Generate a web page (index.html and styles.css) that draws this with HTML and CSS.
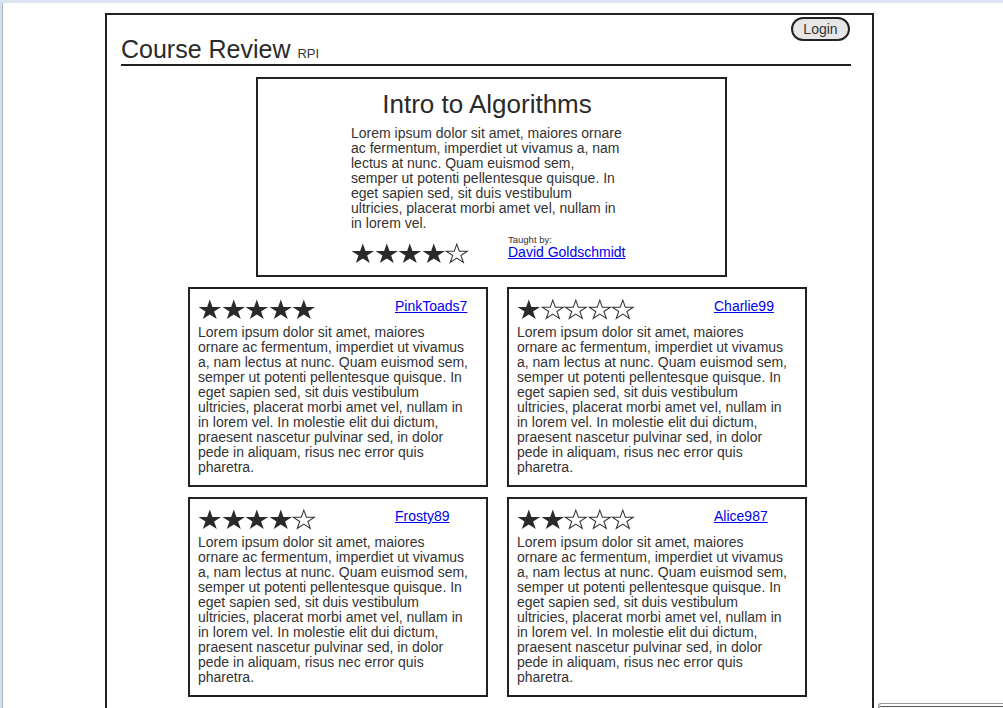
FILE: index.html
```html
<!DOCTYPE html>
<html lang="en">
<head>
<meta charset="utf-8">
<title>Course Review</title>
<link rel="stylesheet" href="styles.css">
</head>
<body>
<svg class="defs" aria-hidden="true">
  <symbol id="star-full" viewBox="0 0 24 22">
    <polygon points="12,0.5 14.72,8.14 23.5,8.14 16.39,12.86 19.11,20.5 12,15.77 4.89,20.5 7.61,12.86 0.5,8.14 9.28,8.14" fill="#2a2a2a"/>
  </symbol>
  <symbol id="star-empty" viewBox="0 0 24 22">
    <polygon points="12,1.16 14.56,8.34 22.81,8.34 16.13,12.78 18.68,19.9 12,15.45 5.32,19.9 7.87,12.78 1.19,8.34 9.44,8.34" fill="none" stroke="#333" stroke-width="1.05" stroke-linejoin="miter"/>
  </symbol>
</svg>
<div class="viewport">
  <div class="frame">
    <header class="site-header">
      <h1 class="brand">Course Review <span class="brand-sub">RPI</span></h1>
      <button class="login" type="button">Login</button>
    </header>
    <main class="content">
      <section class="course">
        <h2 class="course-title">Intro to Algorithms</h2>
        <p class="course-desc">Lorem ipsum dolor sit amet, maiores ornare ac fermentum, imperdiet ut vivamus a, nam lectus at nunc. Quam euismod sem, semper ut potenti pellentesque quisque. In eget sapien sed, sit duis vestibulum ultricies, placerat morbi amet vel, nullam in in lorem vel.</p>
        <div class="course-meta">
          <div class="stars course-stars">
            <svg class="star"><use href="#star-full"/></svg><svg class="star"><use href="#star-full"/></svg><svg class="star"><use href="#star-full"/></svg><svg class="star"><use href="#star-full"/></svg><svg class="star"><use href="#star-empty"/></svg>
          </div>
          <div class="teacher">
            <div class="teacher-label">Taught by:</div>
            <a class="teacher-link" href="#">David Goldschmidt</a>
          </div>
        </div>
      </section>
      <section class="reviews">
        <article class="card">
          <div class="card-head">
            <div class="stars card-stars">
              <svg class="star"><use href="#star-full"/></svg><svg class="star"><use href="#star-full"/></svg><svg class="star"><use href="#star-full"/></svg><svg class="star"><use href="#star-full"/></svg><svg class="star"><use href="#star-full"/></svg>
            </div>
            <a class="user" href="#">PinkToads7</a>
          </div>
          <p class="card-text">Lorem ipsum dolor sit amet, maiores ornare ac fermentum, imperdiet ut vivamus a, nam lectus at nunc. Quam euismod sem, semper ut potenti pellentesque quisque. In eget sapien sed, sit duis vestibulum ultricies, placerat morbi amet vel, nullam in in lorem vel. In molestie elit dui dictum, praesent nascetur pulvinar sed, in dolor pede in aliquam, risus nec error quis pharetra.</p>
        </article>
        <article class="card">
          <div class="card-head">
            <div class="stars card-stars">
              <svg class="star"><use href="#star-full"/></svg><svg class="star"><use href="#star-empty"/></svg><svg class="star"><use href="#star-empty"/></svg><svg class="star"><use href="#star-empty"/></svg><svg class="star"><use href="#star-empty"/></svg>
            </div>
            <a class="user" href="#">Charlie99</a>
          </div>
          <p class="card-text">Lorem ipsum dolor sit amet, maiores ornare ac fermentum, imperdiet ut vivamus a, nam lectus at nunc. Quam euismod sem, semper ut potenti pellentesque quisque. In eget sapien sed, sit duis vestibulum ultricies, placerat morbi amet vel, nullam in in lorem vel. In molestie elit dui dictum, praesent nascetur pulvinar sed, in dolor pede in aliquam, risus nec error quis pharetra.</p>
        </article>
        <article class="card">
          <div class="card-head">
            <div class="stars card-stars">
              <svg class="star"><use href="#star-full"/></svg><svg class="star"><use href="#star-full"/></svg><svg class="star"><use href="#star-full"/></svg><svg class="star"><use href="#star-full"/></svg><svg class="star"><use href="#star-empty"/></svg>
            </div>
            <a class="user" href="#">Frosty89</a>
          </div>
          <p class="card-text">Lorem ipsum dolor sit amet, maiores ornare ac fermentum, imperdiet ut vivamus a, nam lectus at nunc. Quam euismod sem, semper ut potenti pellentesque quisque. In eget sapien sed, sit duis vestibulum ultricies, placerat morbi amet vel, nullam in in lorem vel. In molestie elit dui dictum, praesent nascetur pulvinar sed, in dolor pede in aliquam, risus nec error quis pharetra.</p>
        </article>
        <article class="card">
          <div class="card-head">
            <div class="stars card-stars">
              <svg class="star"><use href="#star-full"/></svg><svg class="star"><use href="#star-full"/></svg><svg class="star"><use href="#star-empty"/></svg><svg class="star"><use href="#star-empty"/></svg><svg class="star"><use href="#star-empty"/></svg>
            </div>
            <a class="user" href="#">Alice987</a>
          </div>
          <p class="card-text">Lorem ipsum dolor sit amet, maiores ornare ac fermentum, imperdiet ut vivamus a, nam lectus at nunc. Quam euismod sem, semper ut potenti pellentesque quisque. In eget sapien sed, sit duis vestibulum ultricies, placerat morbi amet vel, nullam in in lorem vel. In molestie elit dui dictum, praesent nascetur pulvinar sed, in dolor pede in aliquam, risus nec error quis pharetra.</p>
        </article>
      </section>
    </main>
  </div>
  <div class="corner-panel"></div>
</div>
</body>
</html>
```

FILE: styles.css
```css
html, body {
  margin: 0;
  padding: 0;
  height: 708px;
  overflow: hidden;
  background: #ffffff;
}

body {
  border-top: 3px solid #dbe5f1;
  border-left: 2px solid #d3dfec;
  box-sizing: border-box;
  font-family: "Liberation Sans", Arial, sans-serif;
  color: #333333;
}

.defs {
  position: absolute;
  width: 0;
  height: 0;
  overflow: hidden;
}

.viewport {
  border-left: 1px solid #aeb7c1;
  height: 100%;
  position: relative;
  overflow: hidden;
}

.frame {
  box-sizing: border-box;
  width: 769px;
  min-height: 760px;
  margin: 10px 0 0 102px;
  border: 2px solid #222222;
}

.site-header {
  display: flex;
  justify-content: space-between;
  align-items: flex-start;
  width: 730px;
  height: 51px;
  box-sizing: border-box;
  margin-left: 14px;
  border-bottom: 2px solid #222222;
}

.brand {
  margin: 20px 0 0 0;
  font-size: 25px;
  line-height: 28px;
  height: 28px;
  font-weight: normal;
  color: #2a2a2a;
}

.brand-sub {
  font-size: 13px;
  line-height: 13px;
  color: #333333;
}

.login {
  box-sizing: border-box;
  margin: 2px 1px 0 0;
  width: 59px;
  height: 24px;
  padding: 0;
  border: 2px solid #222222;
  border-radius: 12px;
  background: #e6e6e6;
  font-family: "Liberation Sans", Arial, sans-serif;
  font-size: 14px;
  line-height: 20px;
  color: #333333;
}

.content {
  padding: 11px 0 0 81px;
}

.course {
  box-sizing: border-box;
  width: 471px;
  height: 200px;
  margin-left: 68px;
  padding: 10px 0 0 93px;
  border: 2px solid #222222;
}

.course-title {
  width: 272px;
  margin: 0 0 7px 0;
  font-size: 26px;
  line-height: 30px;
  font-weight: normal;
  text-align: center;
  color: #2a2a2a;
}

.course-desc {
  width: 272px;
  margin: 0;
  font-size: 14px;
  line-height: 15px;
}

.course-meta {
  display: flex;
  margin-top: 3px;
}

.stars {
  display: flex;
}

.star {
  width: 23.6px;
  height: 21.6px;
  flex: none;
}

.course-stars {
  width: 157px;
  margin-top: 9px;
}

.teacher-label {
  font-size: 9.5px;
  line-height: 11px;
  color: #333333;
}

.teacher-link,
.user {
  font-size: 14px;
  line-height: 15px;
  color: #0000ee;
  text-decoration: underline;
}

.teacher-link {
  display: block;
}

.reviews {
  display: grid;
  grid-template-columns: 300px 300px;
  column-gap: 19px;
  row-gap: 10px;
  margin-top: 10px;
}

.card {
  box-sizing: border-box;
  height: 200px;
  padding: 8px 8px 0 8px;
  border: 2px solid #222222;
}

.card-head {
  display: flex;
  height: 28px;
}

.card-stars {
  width: 197px;
  padding-top: 1.5px;
}

.user {
  display: block;
  padding-top: 2px;
}

.card-text {
  width: 270.4px;
  margin: 0;
  font-size: 14px;
  line-height: 15px;
}

.corner-panel {
  position: absolute;
  left: 875px;
  top: 700px;
  width: 140px;
  height: 20px;
  border-top: 1px solid #9a9a9a;
  border-left: 1px solid #9a9a9a;
  border-top-left-radius: 3px;
  box-shadow: inset 0 2px 0 #ffffff, inset 0 3px 0 #555555;
}
```
